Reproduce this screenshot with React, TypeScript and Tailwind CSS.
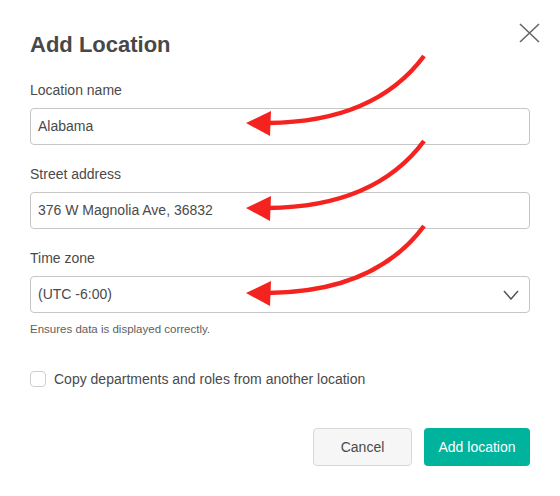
import React from 'react';

const Arrow = ({ dy }: { dy: number }) => (
  <g transform={`translate(0 ${dy})`}>
    <path d="M424 56 Q 375 122 268 123" fill="none" stroke="#f5231f" strokeWidth={4.5} />
    <polygon points="246,123 271,111 270,136" fill="#f5231f" />
  </g>
);

const Field = ({ label, value, select }: { label: string; value: string; select?: boolean }) => (
  <div className="flex flex-col">
    <label className="text-[14px] leading-[16px] text-[#4a4a4a]">{label}</label>
    <div className="mt-[10px] flex h-[37px] items-center justify-between rounded-[4px] border border-[#c6c6c6] bg-white pl-[7px] pr-[10px]">
      <span className="text-[14px] text-[#4a4a4a]">{value}</span>
      {select && (
        <svg width="16" height="10" viewBox="0 0 16 10">
          <path d="M1 1 L8 9 L15 1" fill="none" stroke="#555" strokeWidth={1.5} />
        </svg>
      )}
    </div>
  </div>
);

export default function App() {
  return (
    <div className="relative h-[496px] w-[560px] overflow-hidden bg-white font-['Liberation_Sans',Arial,sans-serif] text-[#4a4a4a]">
      <div className="w-[530px] pl-[30px] pt-[31px]">
        <h1 className="text-[22px] font-bold leading-[28px] text-[#484848]">Add Location</h1>

        <div className="mt-[23px] flex flex-col gap-[21px]">
          <Field label="Location name" value="Alabama" />
          <Field label="Street address" value="376 W Magnolia Ave, 36832" />
          <Field label="Time zone" value="(UTC -6:00)" select />
        </div>
        <p className="mt-[9px] text-[11.5px] leading-[14px] text-[#5e5e5e]">Ensures data is displayed correctly.</p>

        <label className="mt-[35px] flex h-[16px] items-center gap-[8px]">
          <span className="h-[16px] w-[16px] rounded-[4px] border border-[#cfcfcf] bg-white" />
          <span className="text-[14px] leading-[16px] text-[#4a4a4a]">Copy departments and roles from another location</span>
        </label>

        <div className="mt-[41px] flex justify-end gap-[12px]">
          <button className="h-[38px] w-[99px] rounded-[4px] border border-[#d8d8d8] bg-[#f6f6f6] text-[14px] text-[#4a4a4a]">
            Cancel
          </button>
          <button className="h-[38px] w-[106px] rounded-[4px] bg-[#00b39c] text-[14px] text-white">
            Add location
          </button>
        </div>
      </div>

      {/* close */}
      <button className="absolute left-[519px] top-[23px]">
        <svg width="21" height="20" viewBox="0 0 21 20">
          <path d="M1 1 L20 19 M20 1 L1 19" stroke="#666" strokeWidth={1.6} fill="none" />
        </svg>
      </button>

      {/* annotation arrows */}
      <svg className="pointer-events-none absolute inset-0" width="560" height="496" viewBox="0 0 560 496">
        <Arrow dy={0} />
        <Arrow dy={85} />
        <Arrow dy={170} />
      </svg>
    </div>
  );
}
